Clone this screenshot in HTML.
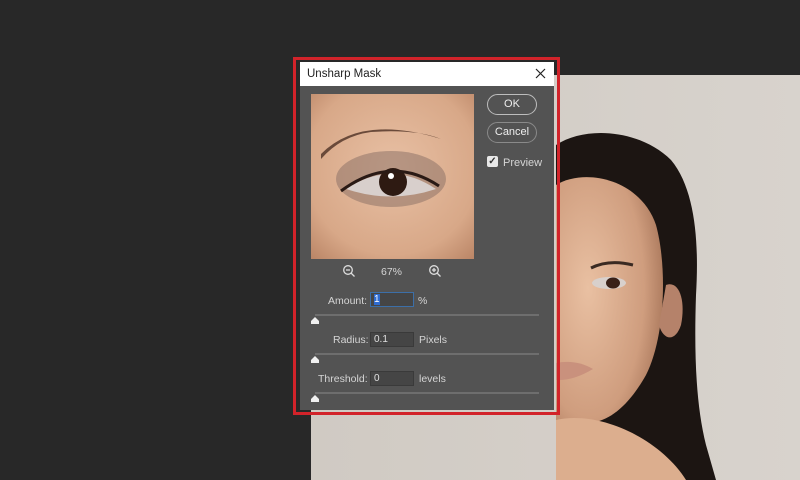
<!DOCTYPE html>
<html><head><meta charset="utf-8"><style>
*{margin:0;padding:0;box-sizing:border-box}
body{width:800px;height:480px;background:#282828;position:relative;overflow:hidden;font-family:"Liberation Sans",sans-serif;color:#dcdcdc;font-size:11px}
.abs{position:absolute}
.dlg{left:300px;top:62px;width:254px;height:348px;background:#535353}
.title{left:0;top:0;width:254px;height:24px;background:#fff;color:#222;font-size:11.5px;padding:6px 0 0 7px}
.btn{border:1.5px solid #bdbdbd;border-radius:11px;width:50px;height:21px;text-align:center;line-height:19px;font-size:11px;color:#eee}
.field{background:#454545;border:1px solid #3a3a3a;height:15px;width:44px;font-size:10px;padding:1px 3px;color:#e0e0e0}
.track{height:2px;background:#6e6e6e;width:224px;left:15px}
.lbl{font-size:10.5px;color:#d5d5d5}
</style></head><body>
<svg class="abs" style="left:311px;top:75px" width="489" height="405">
<defs>
<linearGradient id="bg" x1="0" x2="1"><stop offset="0" stop-color="#d0cac3"/><stop offset="1" stop-color="#d8d3cd"/></linearGradient>
<radialGradient id="sk" cx="0.3" cy="0.45" r="0.75"><stop offset="0" stop-color="#e9c0a2"/><stop offset="0.7" stop-color="#cf9d7e"/><stop offset="1" stop-color="#a77559"/></radialGradient>
</defs>
<rect width="489" height="405" fill="url(#bg)"/>
<path d="M245 70 C275 50 330 55 360 85 C385 115 388 170 385 220 C383 280 385 330 395 370 L405 405 L300 405 L245 405Z" fill="#1c1512"/>
<path d="M245 110 C275 92 330 105 345 150 C356 190 355 260 335 300 C318 330 300 345 280 348 C265 350 252 350 245 348Z" fill="url(#sk)"/>
<path d="M355 210 C368 205 375 225 370 250 C364 268 352 265 348 250Z" fill="#b5826a"/>
<path d="M245 345 C290 335 350 365 375 405 L245 405Z" fill="#dcae8e"/>
<ellipse cx="298" cy="208" rx="17" ry="6" fill="#d8d0cc"/>
<ellipse cx="302" cy="208" rx="7" ry="5.5" fill="#3a2118"/>
<path d="M280 193 Q298 184 322 190" stroke="#3a2a22" stroke-width="3" fill="none"/>
<path d="M245 288 Q265 284 282 294 Q262 306 245 305Z" fill="#c9917d"/>
</svg>
<div class="abs" style="left:293px;top:57px;width:267px;height:358px;border:3px solid #d2232a"></div>
<div class="abs dlg">
 <div class="abs title">Unsharp Mask</div>
 <svg class="abs" style="left:235px;top:6px" width="11" height="11"><path d="M1 1L10 10M10 1L1 10" stroke="#222" stroke-width="1.2"/></svg>
 <svg class="abs" style="left:11px;top:32px" width="163" height="165">
  <defs><radialGradient id="e" cx="0.5" cy="0.45" r="0.75"><stop offset="0" stop-color="#e8c0a4"/><stop offset="0.7" stop-color="#d8a888"/><stop offset="1" stop-color="#b98465"/></radialGradient></defs>
  <rect width="163" height="165" fill="url(#e)"/>
  <path d="M10 60 Q50 20 130 45 Q105 35 60 38 Q30 42 10 65Z" fill="#6a4a3a"/>
  <ellipse cx="80" cy="85" rx="55" ry="28" fill="#8e7268" opacity="0.55"/>
  <path d="M35 95 Q80 65 125 95 Q80 110 35 95Z" fill="#d8cfcc"/>
  <circle cx="82" cy="88" r="14" fill="#2e1a12"/>
  <circle cx="80" cy="82" r="3" fill="#fff"/>
  <path d="M30 97 Q80 60 128 92" stroke="#2a1a15" stroke-width="3" fill="none"/>
 </svg>
 <div class="abs btn" style="left:187px;top:32px">OK</div>
 <div class="abs btn" style="left:187px;top:60px;border-color:#8a8a8a">Cancel</div>
 <div class="abs" style="left:187px;top:94px;width:11px;height:11px;background:#e8e8e8;border-radius:2px;color:#333;font-size:10px;line-height:11px;text-align:center;font-weight:bold">✓</div>
 <div class="abs lbl" style="left:203px;top:95px;font-size:11px">Preview</div>
 <svg class="abs" style="left:42px;top:202px" width="14" height="14"><circle cx="6" cy="6" r="4.3" stroke="#ddd" stroke-width="1.3" fill="none"/><path d="M4 6h4M9 9l3.5 3.5" stroke="#ddd" stroke-width="1.3"/></svg>
 <div class="abs lbl" style="left:81px;top:204px">67%</div>
 <svg class="abs" style="left:128px;top:202px" width="14" height="14"><circle cx="6" cy="6" r="4.3" stroke="#ddd" stroke-width="1.3" fill="none"/><path d="M4 6h4M6 4v4M9 9l3.5 3.5" stroke="#ddd" stroke-width="1.3"/></svg>
 <div class="abs lbl" style="left:28px;top:233px">Amount:</div>
 <div class="abs field" style="left:70px;top:230px;border-color:#3c6fa8"><span style="background:#2e6bd0;color:#fff">1</span></div>
 <div class="abs lbl" style="left:118px;top:233px">%</div>
 <div class="abs track" style="top:252px"></div>
 <svg class="abs" style="left:10px;top:254px" width="10" height="9"><path d="M1 8 L1 5 L5 1 L9 5 L9 8Z" fill="#f0f0f0"/></svg>
 <div class="abs lbl" style="left:33px;top:272px">Radius:</div>
 <div class="abs field" style="left:70px;top:270px">0.1</div>
 <div class="abs lbl" style="left:119px;top:272px">Pixels</div>
 <div class="abs track" style="top:291px"></div>
 <svg class="abs" style="left:10px;top:293px" width="10" height="9"><path d="M1 8 L1 5 L5 1 L9 5 L9 8Z" fill="#f0f0f0"/></svg>
 <div class="abs lbl" style="left:18px;top:311px">Threshold:</div>
 <div class="abs field" style="left:70px;top:309px">0</div>
 <div class="abs lbl" style="left:119px;top:311px">levels</div>
 <div class="abs track" style="top:330px"></div>
 <svg class="abs" style="left:10px;top:332px" width="10" height="9"><path d="M1 8 L1 5 L5 1 L9 5 L9 8Z" fill="#f0f0f0"/></svg>
</div>
</body></html>
